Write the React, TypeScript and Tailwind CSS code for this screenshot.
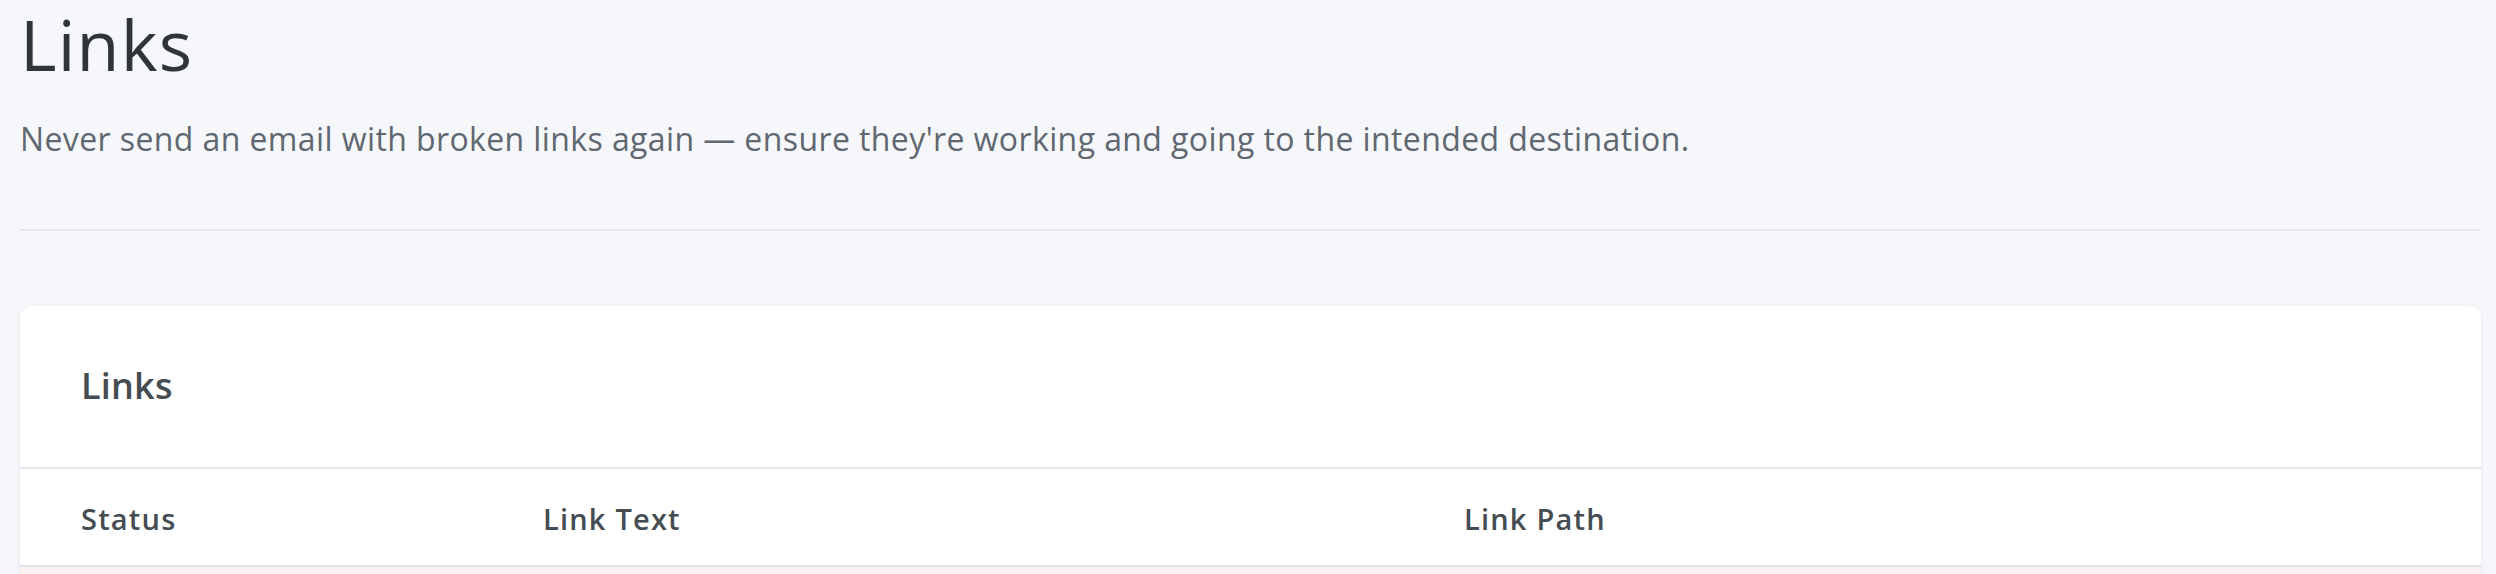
export default function App() {
  return (
    <div className="min-h-screen bg-[#f6f7fa] pl-[20px] pr-[15px] pt-[2px] font-['Open_Sans','Lato',sans-serif]">
      <header>
        <h1 className="text-[70px] leading-[1.2] font-normal tracking-[1.2px] text-[#30353c]">Links</h1>
        <p className="mt-[34px] text-[32px] leading-[1.2] tracking-[0.4px] text-[#5f6770]">
          Never send an email with broken links again — ensure they're working and going to the intended
          destination.
        </p>
      </header>

      <hr className="mt-[71px] border-0 border-t-2 border-[#e6e8ec]" />

      <section className="mt-[75px] overflow-hidden rounded-t-[12px] bg-white shadow-[0_1px_4px_rgba(30,40,60,0.08)]">
        <div className="border-b-2 border-[#e3e6ea] px-[61px] pt-[58px] pb-[59px]">
          <h2 className="text-[36px] leading-[1.2] font-semibold tracking-[0.2px] text-[#454c52]">Links</h2>
        </div>

        <div className="grid grid-cols-[462px_921px_1fr] border-b-2 border-[#dfe2e6] text-[29px] leading-[1.2] font-semibold tracking-[1.2px] text-[#454c52]">
          <div className="pl-[61px] pt-[33px] pb-[29px]">Status</div>
          <div className="pl-[61px] pt-[33px] pb-[29px]">Link Text</div>
          <div className="pl-[61px] pt-[33px] pb-[29px]">Link Path</div>
        </div>

        <div className="h-[20px] bg-[#fbf0f1]" />
      </section>
    </div>
  )
}
